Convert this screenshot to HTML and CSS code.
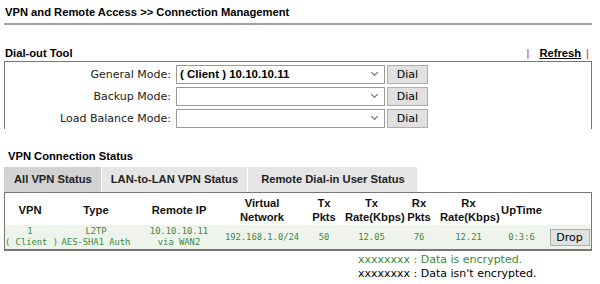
FILE: index.html
```html
<!DOCTYPE html>
<html lang="en">
<head>
    <meta charset="UTF-8">
    <title>Connection Management</title>
    <link rel="stylesheet" href="styles.css">
</head>
<body>
    <h1 class="title">VPN and Remote Access &gt;&gt; Connection Management</h1>

    <div class="section-head">
        <span>Dial-out Tool</span>
        <span class="links"><span class="pipe">|</span><a href="#">Refresh</a><span class="pipe">|</span></span>
    </div>
    <div class="dial-box">
        <div class="dial-row">
            <label>General Mode:</label>
            <div class="select filled">( Client ) 10.10.10.11<span class="caret"></span></div>
            <button type="button" class="btn">Dial</button>
        </div>
        <div class="dial-row">
            <label>Backup Mode:</label>
            <div class="select"><span class="caret"></span></div>
            <button type="button" class="btn">Dial</button>
        </div>
        <div class="dial-row">
            <label>Load Balance Mode:</label>
            <div class="select"><span class="caret"></span></div>
            <button type="button" class="btn">Dial</button>
        </div>
    </div>

    <div class="status-head">VPN Connection Status</div>
    <div class="tabs">
        <div class="tab active">All VPN Status</div>
        <div class="tab">LAN-to-LAN VPN Status</div>
        <div class="tab">Remote Dial-in User Status</div>
    </div>
    <div class="table-box">
        <table>
            <colgroup>
                <col class="c-vpn">
                <col class="c-type">
                <col class="c-ip">
                <col class="c-net">
                <col class="c-pkts">
                <col class="c-rate">
                <col class="c-pkts">
                <col class="c-rate2">
                <col class="c-up">
                <col class="c-drop">
            </colgroup>
            <thead>
                <tr>
                    <th>VPN</th>
                    <th>Type</th>
                    <th>Remote IP</th>
                    <th>Virtual<br>Network</th>
                    <th>Tx<br>Pkts</th>
                    <th>Tx<br>Rate(Kbps)</th>
                    <th>Rx<br>Pkts</th>
                    <th>Rx<br>Rate(Kbps)</th>
                    <th>UpTime</th>
                    <th></th>
                </tr>
            </thead>
            <tbody>
                <tr class="data">
                    <td>1<br>( Client )</td>
                    <td>L2TP<br>AES-SHA1 Auth</td>
                    <td>10.10.10.11<br>via WAN2</td>
                    <td>192.168.1.0/24</td>
                    <td>50</td>
                    <td>12.05</td>
                    <td>76</td>
                    <td>12.21</td>
                    <td>0:3:6</td>
                    <td><button type="button" class="btn drop">Drop</button></td>
                </tr>
            </tbody>
        </table>
    </div>
    <div class="legend">
        <div class="enc">xxxxxxxx : Data is encrypted.</div>
        <div>xxxxxxxx : Data isn't encrypted.</div>
    </div>
</body>
</html>
```

FILE: styles.css
```css
body{
    margin: 0;
    padding: 6px 8px 0 4px;
    background-color: white;
    font-family: "Liberation Sans", Arial, sans-serif;
    color: black;
}
.title{
    margin: 0;
    padding: 0 0 5px 1px;
    font-size: 11.2px;
    font-weight: bold;
    border-bottom: 2px solid #a0a0a0;
}
.section-head{
    display: flex;
    justify-content: space-between;
    align-items: flex-start;
    margin-top: 19px;
    padding: 3px 3px 0 1px;
    height: 14px;
    font-size: 11.2px;
    font-weight: bold;
}
.links{
    display: flex;
}
.pipe{
    color: #c03048;
    font-weight: normal;
}
.links a{
    margin: 0 5px 0 10px;
    color: black;
    text-decoration: underline;
}
.dial-box{
    border: 1px solid #777;
    border-bottom: none;
    padding: 1px 0 2px 0;
    height: 64px;
}
.dial-row{
    display: flex;
    align-items: center;
    height: 22px;
}
.dial-row label{
    width: 166px;
    text-align: right;
    padding-right: 5px;
    font-family: "DejaVu Sans", Verdana, sans-serif;
    font-size: 11px;
    color: #222;
}
.select{
    position: relative;
    box-sizing: border-box;
    width: 209px;
    height: 19px;
    border: 1px solid #999;
    background-color: white;
    font-size: 11.5px;
    font-weight: bold;
    line-height: 17px;
    padding-left: 3px;
}
.caret{
    position: absolute;
    right: 7px;
    top: 4px;
    width: 4px;
    height: 4px;
    border-right: 1px solid #666;
    border-bottom: 1px solid #666;
    transform: rotate(45deg);
}
.btn{
    box-sizing: border-box;
    margin-left: 2px;
    width: 41px;
    height: 19px;
    padding: 0;
    border: 1px solid #adadad;
    background-color: #e1e1e1;
    font-family: "DejaVu Sans", Verdana, sans-serif;
    font-size: 11px;
    color: black;
}
.status-head{
    margin-top: 21px;
    padding-left: 4px;
    font-size: 11.2px;
    font-weight: bold;
    height: 15px;
}
.tabs{
    display: flex;
    gap: 1px;
    margin-top: 2px;
}
.tab{
    height: 25px;
    line-height: 25px;
    padding: 0 9px;
    background-color: #e6e6e6;
    font-size: 11.2px;
    font-weight: bold;
    color: #222;
}
.tab.active{
    background-color: #d2d2d2;
    padding: 0 9px 0 10px;
}
.tab:last-child{
    padding: 0 12px 0 13px;
}
.table-box{
    border: 1px solid #777;
    border-bottom: 2px solid #777;
}
table{
    width: 100%;
    table-layout: fixed;
    border-collapse: collapse;
}
.c-vpn{ width: 50px; }
.c-type{ width: 82px; }
.c-ip{ width: 84px; }
.c-net{ width: 82px; }
.c-pkts{ width: 42px; }
.c-rate{ width: 53px; }
.c-rate2{ width: 57px; }
.c-up{ width: 49px; }
th, td{
    padding: 0;
    white-space: nowrap;
    text-align: center;
}
th{
    height: 30px;
    padding-top: 2px;
    font-size: 11.2px;
    font-weight: bold;
    line-height: 14px;
    color: #111;
}
.data td{
    height: 24px;
    background-color: #eef3ec;
    font-family: "DejaVu Sans Mono", monospace;
    font-size: 8.8px;
    line-height: 11px;
    color: #3a8a3a;
}
.btn.drop{
    width: 40px;
    height: 17px;
    margin: 0 0 0 2px;
    font-size: 11px;
}
.legend{
    margin: 2px 0 0 354px;
    font-family: "DejaVu Sans", Verdana, sans-serif;
    font-size: 11px;
    line-height: 14px;
}
.enc{
    color: #3a8a3a;
}
```
